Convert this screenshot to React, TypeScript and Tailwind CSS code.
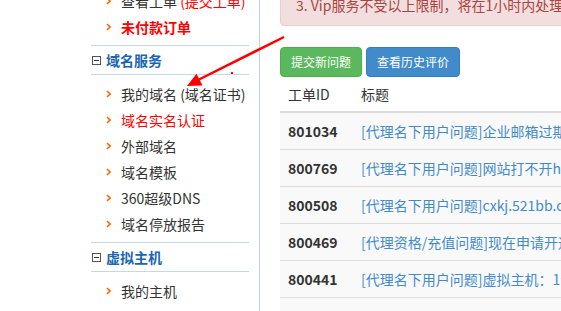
import React from 'react';

type Item = { text: React.ReactNode; className?: string };

const topItems: Item[] = [
  {
    text: (
      <>
        查看工单 <span className="text-[#ff0000]">(提交工单)</span>
      </>
    ),
  },
  { text: '未付款订单', className: 'text-[#ff0000] font-bold' },
];

const domainItems: Item[] = [
  { text: '我的域名 (域名证书)' },
  { text: '域名实名认证', className: 'text-[#ff0000]' },
  { text: '外部域名' },
  { text: '域名模板' },
  { text: '360超级DNS' },
  { text: '域名停放报告' },
];

const hostItems: Item[] = [{ text: '我的主机' }, { text: '主机续费' }];

const tickets = [
  { id: '801034', title: '[代理名下用户问题]企业邮箱过期了怎么续费' },
  { id: '800769', title: '[代理名下用户问题]网站打不开http://www' },
  { id: '800508', title: '[代理名下用户问题]cxkj.521bb.com解析' },
  { id: '800469', title: '[代理资格/充值问题]现在申请开通代理' },
  { id: '800441', title: '[代理名下用户问题]虚拟主机：1个月' },
];

const Chevron = () => (
  <svg width="5" height="8" viewBox="0 0 5 8" className="ml-[15px] mr-[10px] shrink-0">
    <path d="M1 1 L4 4 L1 7" fill="none" stroke="#ff6a00" strokeWidth="1.6" />
  </svg>
);

const MenuList = ({ items, className = '' }: { items: Item[]; className?: string }) => (
  <ul className={`pt-[6px] pb-[5px] border-b border-[#c3d9ea] ${className}`}>
    {items.map((item, i) => (
      <li key={i} className="h-[26px] flex items-center text-[14px] leading-[26px] text-[#333] whitespace-nowrap">
        <Chevron />
        <span className={item.className}>{item.text}</span>
      </li>
    ))}
  </ul>
);

const SectionHeader = ({ title }: { title: string }) => (
  <div className="h-[29px] flex items-center border-b border-[#c3d9ea]">
    <span className="ml-[1px] w-[9px] h-[9px] border border-[#555] flex items-center justify-center shrink-0">
      <span className="w-[5px] h-[1px] bg-[#333]" />
    </span>
    <span className="ml-[5px] text-[14px] font-bold text-[#1a66b0]">{title}</span>
  </div>
);

export default function App() {
  return (
    <div className="relative w-[561px] h-[311px] overflow-hidden bg-white font-['Noto_Sans_CJK_SC','Liberation_Sans',sans-serif]">
      <div className="flex h-full">
        <aside className="w-[260px] shrink-0 border-r border-[#bcd3e6] pl-[91px] pr-[10px]">
          <MenuList items={topItems} className="-mt-[18px]" />
          <SectionHeader title="域名服务" />
          <MenuList items={domainItems} />
          <SectionHeader title="虚拟主机" />
          <MenuList items={hostItems} />
        </aside>

        <main className="flex-1 overflow-hidden pl-[20px]">
          <div className="w-[640px]">
            <div className="-mt-[6px] border border-[#ebccd1] bg-[#f2dede] text-[#a94442] rounded-b-[4px] px-[15px] pb-[10px] text-[14px] leading-[20px] whitespace-nowrap">
              3. Vip服务不受以上限制，将在1小时内处理完毕。
            </div>

            <div className="mt-[21px] flex gap-[4px]">
              <button className="h-[30px] px-[10px] text-[12px] text-white bg-[#5cb85c] border border-[#4cae4c] rounded-[4px]">
                提交新问题
              </button>
              <button className="h-[30px] px-[10px] text-[12px] text-white bg-[#428bca] border border-[#357ebd] rounded-[4px]">
                查看历史评价
              </button>
            </div>

            <div className="text-[14px] text-[#333]">
              <div className="h-[36px] flex items-center border-b-2 border-[#ddd]">
                <div className="w-[81px] pl-[8px]">工单ID</div>
                <div>标题</div>
              </div>
              {tickets.map((t) => (
                <div key={t.id} className="h-[37px] flex items-center border-b border-[#ddd] bg-[#f9f9f9]">
                  <div className="w-[81px] pl-[8px] font-bold">{t.id}</div>
                  <div className="text-[#428bca] whitespace-nowrap">{t.title}</div>
                </div>
              ))}
              <div className="h-[37px] bg-[#f9f9f9]" />
            </div>
          </div>
        </main>
      </div>

      <svg className="absolute inset-0 pointer-events-none" width="561" height="311" viewBox="0 0 561 311">
        <line x1="284" y1="37" x2="198" y2="80" stroke="#ff0000" strokeWidth="2.5" />
        <polygon points="187,86 202.5,85.5 196.5,73.8" fill="#ff0000" />
        <rect x="231" y="72" width="2" height="2" fill="#ff0000" />
      </svg>
    </div>
  );
}
